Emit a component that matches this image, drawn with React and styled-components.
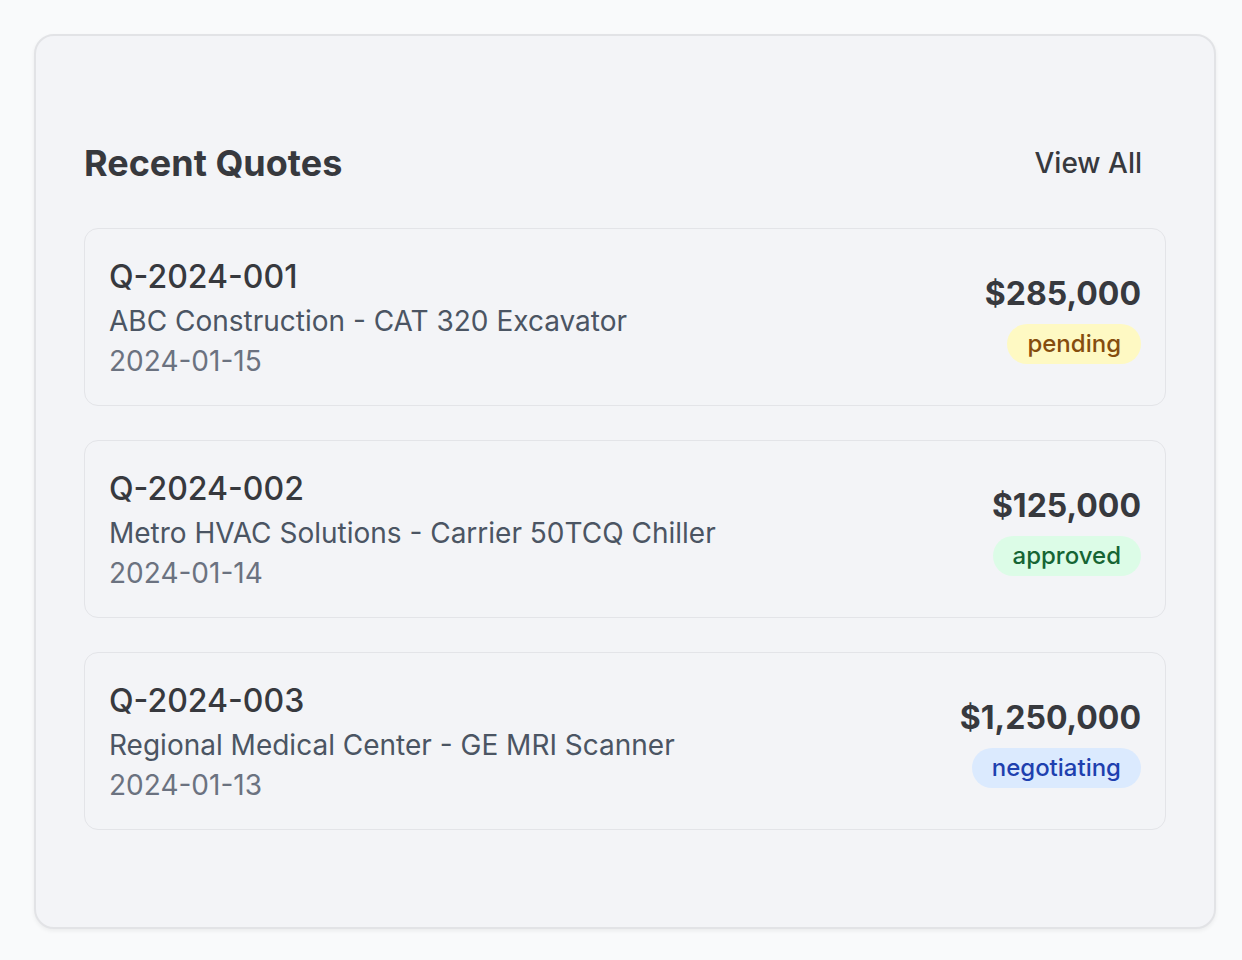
import styled, { createGlobalStyle } from "styled-components";

const GlobalStyle = createGlobalStyle`
  body {
    margin: 0;
    background: #f9fafb;
    font-family: Inter, "Noto Sans", sans-serif;
  }
`;

const quotes = [
  {
    id: "Q-2024-001",
    title: "ABC Construction - CAT 320 Excavator",
    date: "2024-01-15",
    amount: "$285,000",
    status: "pending",
  },
  {
    id: "Q-2024-002",
    title: "Metro HVAC Solutions - Carrier 50TCQ Chiller",
    date: "2024-01-14",
    amount: "$125,000",
    status: "approved",
  },
  {
    id: "Q-2024-003",
    title: "Regional Medical Center - GE MRI Scanner",
    date: "2024-01-13",
    amount: "$1,250,000",
    status: "negotiating",
  },
];

const statusColors = {
  pending: { bg: "#fef9c3", fg: "#854d0e" },
  approved: { bg: "#dcfce7", fg: "#166534" },
  negotiating: { bg: "#dbeafe", fg: "#1e40af" },
};

const App = () => {
  return (
    <>
      <GlobalStyle />
      <Page>
        <Card>
          <Header>
            <Title>Recent Quotes</Title>
            <ViewAll>View All</ViewAll>
          </Header>
          <List>
            {quotes.map((q) => (
              <Item key={q.id}>
                <Info>
                  <QuoteId>{q.id}</QuoteId>
                  <Desc>{q.title}</Desc>
                  <DateText>{q.date}</DateText>
                </Info>
                <Side>
                  <Amount>{q.amount}</Amount>
                  <Badge status={q.status}>{q.status}</Badge>
                </Side>
              </Item>
            ))}
          </List>
        </Card>
      </Page>
    </>
  );
};

const Page = styled.div`
  padding: 34px 26px 34px 34px;
`;

const Card = styled.div`
  background: #f3f4f7;
  border: 2px solid #e2e3e6;
  border-radius: 20px;
  box-shadow: 0 2px 4px rgba(0, 0, 0, 0.06);
  padding: 91px 48px 97px;
`;

const Header = styled.div`
  display: flex;
  align-items: center;
  justify-content: space-between;
  height: 72px;
  margin-bottom: 29px;
`;

const Title = styled.h2`
  margin: 0;
  font-size: 36px;
  line-height: 56px;
  font-weight: 700;
  color: #37393e;
`;

const ViewAll = styled.button`
  background: transparent;
  border: none;
  padding: 16px 24px;
  font-family: inherit;
  font-size: 28px;
  line-height: 40px;
  font-weight: 500;
  color: #37393e;
  cursor: pointer;
`;

const List = styled.div`
  display: flex;
  flex-direction: column;
  gap: 34px;
`;

const Item = styled.div`
  display: flex;
  align-items: center;
  justify-content: space-between;
  border: 1px solid #e3e4e8;
  border-radius: 14px;
  padding: 24px;
`;

const Info = styled.div`
  display: flex;
  flex-direction: column;
`;

const QuoteId = styled.div`
  font-size: 32px;
  line-height: 48px;
  font-weight: 500;
  color: #37393e;
`;

const Desc = styled.div`
  font-size: 28px;
  line-height: 40px;
  color: #4b5563;
`;

const DateText = styled.div`
  font-size: 28px;
  line-height: 40px;
  color: #6b7280;
`;

const Side = styled.div`
  display: flex;
  flex-direction: column;
  align-items: flex-end;
  gap: 6px;
`;

const Amount = styled.div`
  font-size: 32px;
  line-height: 48px;
  font-weight: 700;
  color: #37393e;
`;

const Badge = styled.span`
  display: inline-block;
  padding: 4px 20px;
  border-radius: 999px;
  font-size: 24px;
  line-height: 32px;
  font-weight: 500;
  background: ${(p) => statusColors[p.status].bg};
  color: ${(p) => statusColors[p.status].fg};
`;

export default App;
